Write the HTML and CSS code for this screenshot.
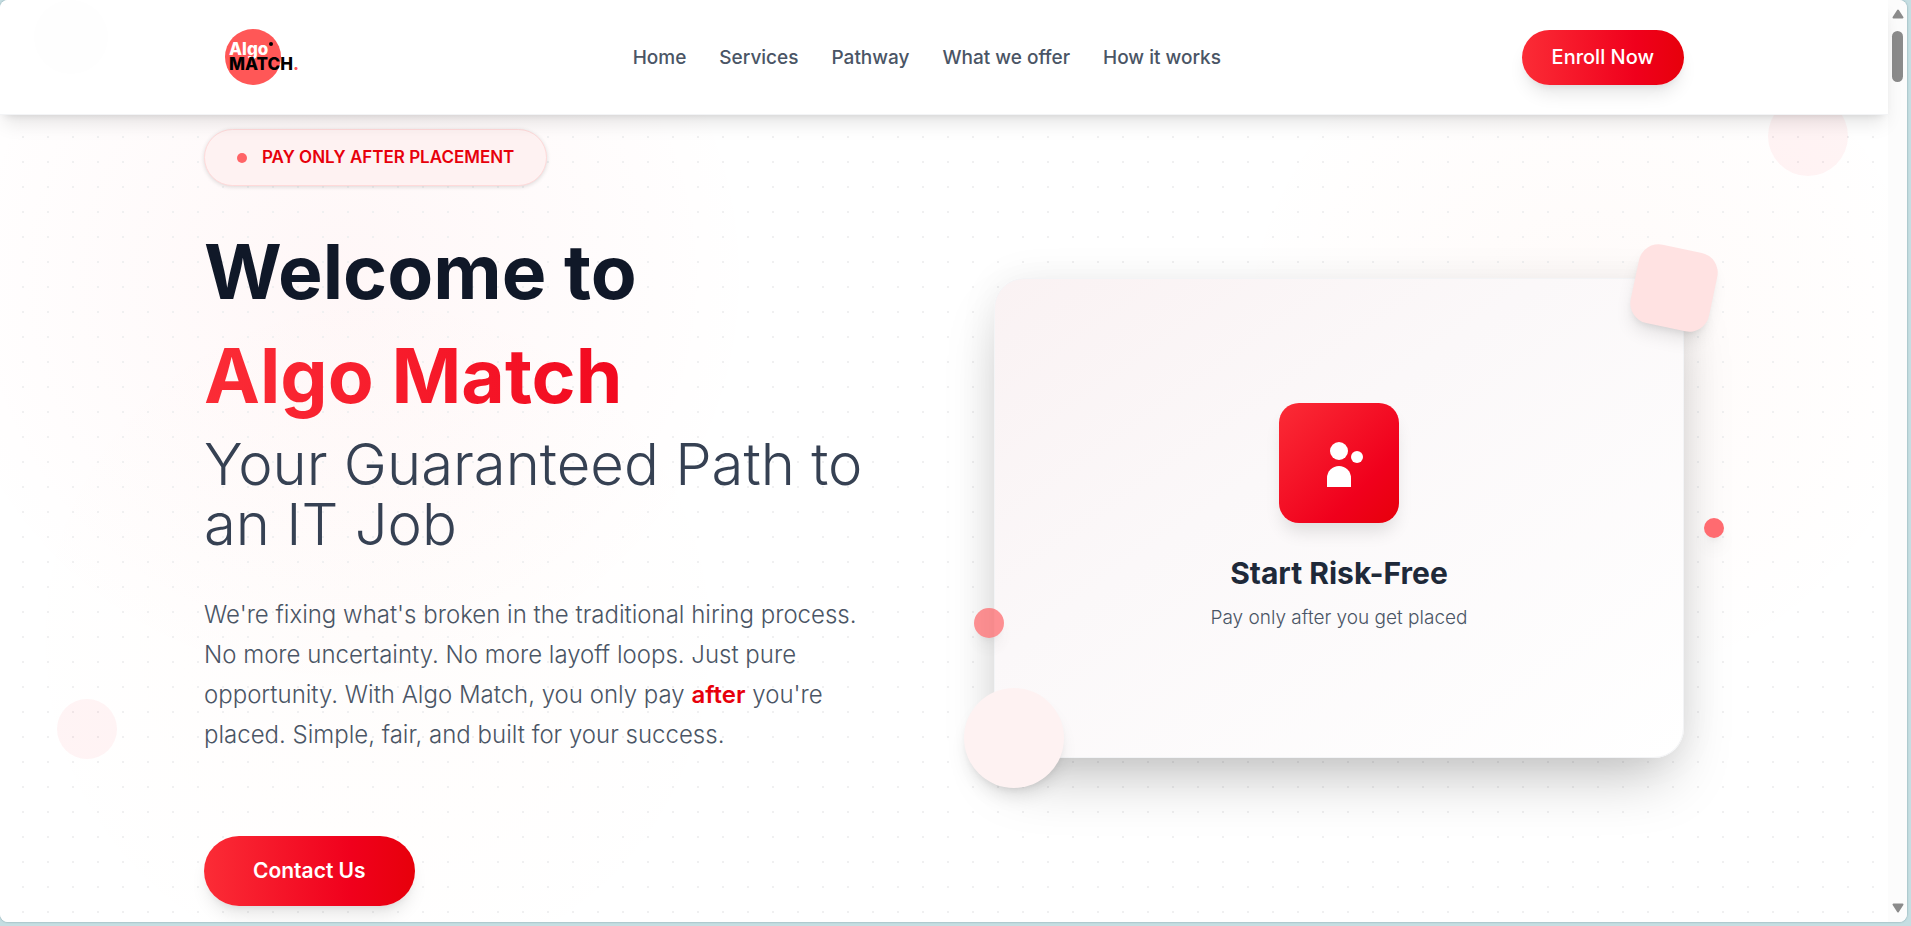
FILE: index.html
```html
<!DOCTYPE html>
<html lang="en">
<head>
<meta charset="utf-8">
<meta name="viewport" content="width=device-width, initial-scale=1">
<title>Algo Match</title>
<link rel="stylesheet" href="styles.css">
</head>
<body>
<div class="window">
  <div class="page">
    <header class="navbar">
      <span class="bubble bubble-nav"></span>
      <div class="container navbar-inner">
        <a class="logo" href="#" aria-label="Algo Match home">
          <svg width="76" height="56" viewBox="0 0 76 56">
            <circle cx="29" cy="28" r="28" fill="#ff5757"/>
            <text class="logo-top" x="5" y="26">Algo</text>
            <circle cx="47" cy="15" r="2" fill="#000"/>
            <text class="logo-bottom" x="5" y="41">MATCH<tspan fill="#ff5757">.</tspan></text>
          </svg>
        </a>
        <nav class="nav-links">
          <a href="#home">Home</a>
          <a href="#services">Services</a>
          <a href="#pathway">Pathway</a>
          <a href="#offer">What we offer</a>
          <a href="#how">How it works</a>
        </nav>
        <button class="btn btn-small" type="button">Enroll Now</button>
      </div>
    </header>

    <main class="hero">
      <span class="bubble bubble-right"></span>
      <span class="bubble bubble-left"></span>
      <div class="container hero-grid">
        <section class="intro">
          <div class="badge"><span class="badge-dot"></span>PAY ONLY AFTER PLACEMENT</div>
          <h1 class="title">
            <span class="title-line">Welcome to</span>
            <span class="title-line"><span class="title-brand">Algo Match</span></span>
          </h1>
          <p class="subtitle">Your Guaranteed Path to an IT Job</p>
          <p class="lead">We're fixing what's broken in the traditional hiring process. No more uncertainty. No more layoff loops. Just pure opportunity. With Algo Match, you only pay <strong>after</strong> you're placed. Simple, fair, and built for your success.</p>
          <button class="btn btn-large" type="button">Contact Us</button>
        </section>

        <section class="card">
          <div class="card-icon">
            <svg width="60" height="60" viewBox="0 0 60 60" fill="#fff" aria-hidden="true">
              <circle cx="30" cy="18" r="9"/>
              <circle cx="48" cy="24" r="6"/>
              <path d="M18 54V45a12 12 0 0 1 24 0v9z"/>
            </svg>
          </div>
          <h2 class="card-title">Start Risk-Free</h2>
          <p class="card-text">Pay only after you get placed</p>
          <span class="shape shape-square"></span>
          <span class="shape shape-circle"></span>
          <span class="shape shape-dot-left"></span>
          <span class="shape shape-dot-right"></span>
        </section>
      </div>
    </main>
  </div>

  <div class="scrollbar" aria-hidden="true">
    <svg width="12" height="10" viewBox="0 0 12 10"><path d="M6 1.5 10.5 8.5h-9z" fill="#8b8b8b" stroke="#8b8b8b" stroke-width="2" stroke-linejoin="round"/></svg>
    <span class="scrollbar-thumb"></span>
    <svg class="scrollbar-down" width="12" height="10" viewBox="0 0 12 10"><path d="M6 8.5 1.5 1.5h9z" fill="#8b8b8b" stroke="#8b8b8b" stroke-width="2" stroke-linejoin="round"/></svg>
  </div>
</div>
</body>
</html>
```
FILE: styles.css
```css
*,
*::before,
*::after {
  box-sizing: border-box;
}

body {
  margin: 0;
  height: 100vh;
  padding: 0 4px 4px 0;
  overflow: hidden;
  background: #c5dee2;
  font-family: Inter, "Liberation Sans", sans-serif;
  color: #4a5565;
}

h1,
h2,
p {
  margin: 0;
}

.window {
  display: flex;
  height: 100%;
  overflow: hidden;
  border-radius: 8px;
  background: #fff;
  box-shadow: 0 0 2px rgba(60, 100, 110, 0.6);
}

.page {
  flex: 1;
  min-width: 0;
  display: flex;
  flex-direction: column;
}

.container {
  width: 100%;
  max-width: 1480px;
  margin: 0 auto;
}

.navbar {
  position: relative;
  z-index: 2;
  padding: 29px 0;
  border-bottom: 1px solid #f3f4f6;
  background: #fff;
  box-shadow: 0 12px 18px -4px rgba(0, 0, 0, 0.1), 0 5px 8px -5px rgba(0, 0, 0, 0.12);
}

.navbar-inner {
  position: relative;
  display: flex;
  align-items: center;
  justify-content: space-between;
}

.logo {
  display: flex;
  width: 128px;
  padding-left: 20px;
}

.logo-top,
.logo-bottom {
  font-weight: 800;
  font-size: 17px;
}

.logo-top {
  fill: #fff;
}

.nav-links {
  display: flex;
  gap: 33px;
}

.nav-links a {
  color: #4a5565;
  font-size: 19px;
  font-weight: 500;
  text-decoration: none;
}

.btn {
  border: 0;
  border-radius: 40px;
  background: linear-gradient(90deg, #fb2c36 0%, #f0001c 70%, #e7000b 100%);
  box-shadow: 0 12px 18px -4px rgba(0, 0, 0, 0.1), 0 5px 8px -5px rgba(0, 0, 0, 0.1);
  color: #fff;
  font-family: inherit;
  line-height: 25px;
}

.btn-small {
  padding: 15px 30px;
  font-size: 20px;
  font-weight: 500;
}

.btn-large {
  padding: 22px 49px 23px;
  font-size: 21px;
  font-weight: 600;
}

.hero {
  position: relative;
  flex: 1;
  padding-top: 14px;
  background:
    radial-gradient(circle at 18% 20%, rgba(251, 44, 54, 0.04), transparent 420px),
    radial-gradient(circle at 84% 28%, rgba(251, 100, 54, 0.03), transparent 360px),
    radial-gradient(circle at 20% 65%, rgba(251, 120, 54, 0.015), transparent 380px),
    #fff;
}

.hero::before {
  content: "";
  position: absolute;
  inset: 0;
  background: conic-gradient(from 270deg at 2px 2px, #f0f0f1 90deg, transparent 0) 22px 21px / 25px 25px;
}

.hero-grid {
  position: relative;
  display: grid;
  grid-template-columns: 1fr 1fr;
  gap: 100px;
  align-items: center;
}

.bubble {
  position: absolute;
  border-radius: 50%;
  background: rgba(251, 44, 54, 0.05);
}

.bubble-nav {
  top: 0;
  left: 34px;
  width: 74px;
  height: 74px;
  background: #fefefe;
}

.bubble-right {
  top: -19px;
  right: 40px;
  width: 80px;
  height: 80px;
}

.bubble-left {
  top: 584px;
  left: 57px;
  width: 60px;
  height: 60px;
}

.intro {
  display: flex;
  flex-direction: column;
  align-items: flex-start;
}

.badge {
  display: flex;
  align-items: center;
  gap: 15px;
  padding: 15px 32px;
  border: 1px solid #ffdada;
  border-radius: 40px;
  background: #fef2f2;
  box-shadow: 0 1px 4px rgba(0, 0, 0, 0.14);
  color: #e7000b;
  font-size: 17px;
  font-weight: 600;
  line-height: 25px;
}

.badge-dot {
  width: 10px;
  height: 10px;
  border-radius: 50%;
  background: #ff6467;
}

.title {
  margin-top: 34px;
  color: #101828;
  font-size: 75px;
  font-weight: 700;
  line-height: 104px;
}

.title-line {
  display: block;
}

.title-brand {
  background: linear-gradient(90deg, #fb2c36, #f2091f);
  background-clip: text;
  color: transparent;
}

.subtitle {
  margin-top: 6px;
  color: #364153;
  font-size: 58px;
  font-weight: 300;
  line-height: 60px;
}

.lead {
  margin: 41px 0 81px;
  font-size: 24px;
  font-weight: 300;
  line-height: 40px;
}

.lead strong {
  color: #e7000b;
  font-weight: 600;
}

.card {
  position: relative;
  display: flex;
  flex-direction: column;
  align-items: center;
  justify-content: center;
  min-height: 480px;
  border: 1px solid #f3f4f6;
  border-radius: 30px;
  background: linear-gradient(145deg, #faf2f3 0%, #fbf8f9 40%, #fff 100%);
  box-shadow: 0 30px 60px -15px rgba(0, 0, 0, 0.25), 0 0 40px rgba(0, 0, 0, 0.06);
}

.card-icon {
  display: flex;
  align-items: center;
  justify-content: center;
  width: 120px;
  height: 120px;
  border-radius: 20px;
  background: linear-gradient(135deg, #fb2c36 0%, #f0001c 70%, #e7000b 100%);
  box-shadow: 0 12px 18px -4px rgba(0, 0, 0, 0.12);
}

.card-title {
  margin-top: 30px;
  color: #1e2939;
  font-size: 30px;
  font-weight: 700;
  line-height: 40px;
}

.card-text {
  margin-top: 10px;
  font-size: 19px;
  font-weight: 300;
  line-height: 30px;
}

.shape {
  position: absolute;
  border-radius: 50%;
  box-shadow: 0 12px 18px -4px rgba(0, 0, 0, 0.1), 0 5px 8px -5px rgba(0, 0, 0, 0.12);
}

.shape-square {
  top: -31px;
  right: -31px;
  width: 80px;
  height: 80px;
  border-radius: 20px;
  background: #ffe2e2;
  transform: rotate(12deg);
}

.shape-circle {
  bottom: -31px;
  left: -31px;
  width: 100px;
  height: 100px;
  background: #fef2f2;
}

.shape-dot-left {
  top: 329px;
  left: -21px;
  width: 30px;
  height: 30px;
  background: #ff6467;
  opacity: 0.7;
}

.shape-dot-right {
  top: 239px;
  right: -41px;
  width: 20px;
  height: 20px;
  background: #ff6b70;
}

.scrollbar {
  display: flex;
  flex-direction: column;
  align-items: center;
  gap: 12px;
  flex: none;
  width: 19px;
  padding: 9px 0;
  background: #fcfcfc;
}

.scrollbar-thumb {
  width: 11px;
  height: 51px;
  border-radius: 6px;
  background: #8b8b8b;
}

.scrollbar-down {
  margin-top: auto;
}
```
